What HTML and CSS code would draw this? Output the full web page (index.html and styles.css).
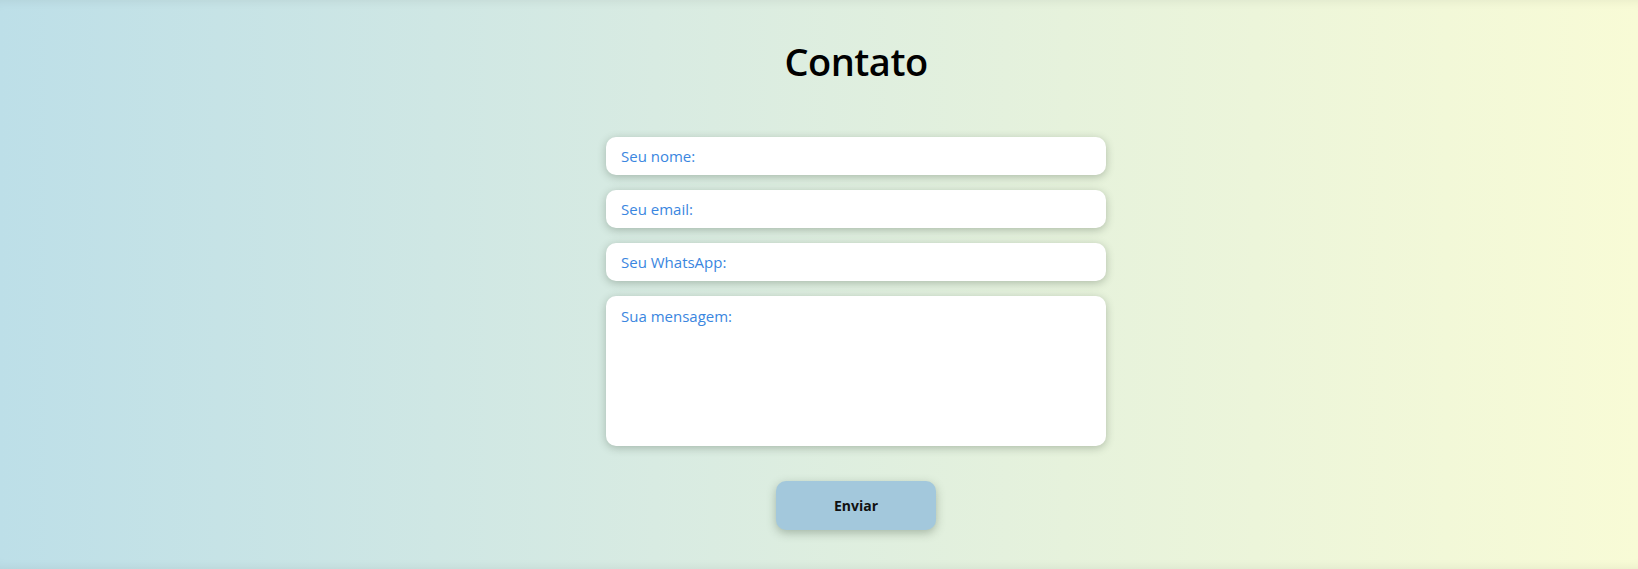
FILE: index.html
```html
<!DOCTYPE html>
<html lang="pt-BR">
<head>
<meta charset="utf-8">
<title>Contato</title>
<link rel="stylesheet" href="styles.css">
</head>
<body>
<main class="page">
  <section class="contact">
    <h1 class="title">Contato</h1>
    <form class="form">
      <input class="field" type="text" placeholder="Seu nome:">
      <input class="field" type="email" placeholder="Seu email:">
      <input class="field" type="tel" placeholder="Seu WhatsApp:">
      <textarea class="field message" placeholder="Sua mensagem:"></textarea>
      <button class="send" type="button">Enviar</button>
    </form>
  </section>
</main>
</body>
</html>
```
FILE: styles.css
```css
html, body {
  margin: 0;
  padding: 0;
  height: 100%;
}
body {
  font-family: "Open Sans", "Noto Sans", sans-serif;
  background: linear-gradient(to right, #bddfe8 0%, #d8ebe2 40%, #e6f2dc 65%, #f8fbd6 100%);
}
.page {
  min-height: 100vh;
  box-sizing: border-box;
  box-shadow: inset 0 10px 12px -10px rgba(0, 0, 0, 0.08), inset 0 -10px 12px -10px rgba(0, 0, 0, 0.08);
  padding-left: 74px;
  display: flex;
  justify-content: center;
}
.contact {
  display: flex;
  flex-direction: column;
  align-items: center;
  padding-top: 36px;
}
.title {
  margin: 0 0 51px;
  font-size: 38px;
  font-weight: 600;
  line-height: 50px;
  color: #000;
  letter-spacing: -0.5px;
}
.form {
  display: flex;
  flex-direction: column;
  align-items: center;
  gap: 15px;
}
.field {
  width: 500px;
  height: 38px;
  box-sizing: border-box;
  border: none;
  border-radius: 10px;
  background: #fff;
  padding: 0 15px;
  font-family: "Open Sans", "Noto Sans", sans-serif;
  font-size: 15px;
  color: #333;
  box-shadow: 0 2px 9px rgba(60, 80, 60, 0.33);
  outline: none;
}
.field::placeholder {
  color: #3a86e0;
}
.message {
  height: 150px;
  padding: 10px 15px;
  resize: none;
  display: block;
}
.send {
  margin-top: 20px;
  width: 160px;
  height: 49px;
  border: none;
  border-radius: 10px;
  background: #a3c8dc;
  font-family: "Open Sans", "Noto Sans", sans-serif;
  font-size: 14px;
  font-weight: 700;
  color: #111;
  box-shadow: 0 3px 10px rgba(60, 80, 60, 0.35);
  cursor: pointer;
}
```
